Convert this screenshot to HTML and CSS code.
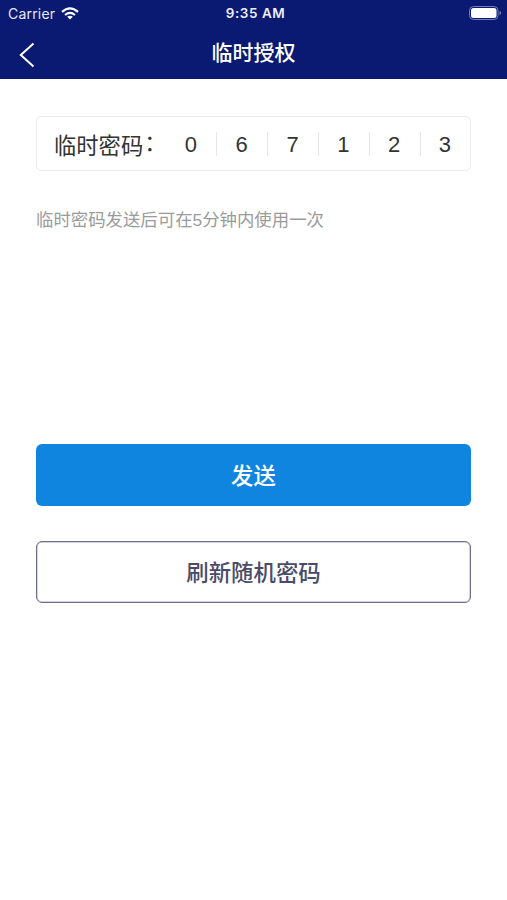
FILE: index.html
```html
<!DOCTYPE html>
<html lang="zh-CN">
<head>
<meta charset="utf-8">
<title>临时授权</title>
<link rel="stylesheet" href="styles.css">
</head>
<body>
<header class="header">
  <div class="status">
    <div class="carrier"><span>Carrier</span>
      <svg class="wifi" width="18" height="13" viewBox="0 0 18 13" fill="none" stroke="#fff" stroke-width="2.2"><path d="M1 4.800Q9-2.200 17 4.800M4 8Q9 3.800 14 8"/><path d="M6.200 9.700Q9 7.600 11.800 9.700L9 12.600Z" fill="#fff" stroke="none"/></svg>
    </div>
    <span class="time">9:35 AM</span>
    <svg class="battery" width="34" height="14" viewBox="0 0 34 14"><rect x=".5" y=".5" width="28.500" height="13" rx="4" fill="none" stroke="#747db8"/><rect x="2" y="2" width="25.500" height="10" rx="2.500" fill="#fff"/><path d="M30.500 4.700q1.700.7 1.700 2.300t-1.700 2.300z" fill="#747db8"/></svg>
  </div>
  <nav class="nav">
    <svg class="back" width="18" height="26" viewBox="0 0 18 26" fill="none" stroke="#fff" stroke-width="2"><path d="M15.500 1.500L2.800 13L15.500 24.500"/></svg>
    <h1 class="title">临时授权</h1>
  </nav>
</header>
<main class="content">
  <section class="code">
    <span class="label">临时密码<span class="colon">：</span></span>
    <div class="digits"><span>0</span><span>6</span><span>7</span><span>1</span><span>2</span><span>3</span></div>
  </section>
  <p class="hint">临时密码发送后可在5分钟内使用一次</p>
  <button class="btn primary">发送</button>
  <button class="btn outline">刷新随机密码</button>
</main>
</body>
</html>
```
FILE: styles.css
```css
* { box-sizing: border-box; }
body { margin: 0; background: #fff; color: #333; font-family: "Liberation Sans", "Noto Sans CJK SC", sans-serif; }
.header { height: 79px; background: #0a1971; color: #fff; }
.status { height: 27px; display: grid; grid-template-columns: 1fr auto 1fr; align-items: start; padding: 0 4px 0 8px; font: 14px/27px Inter, sans-serif; }
.carrier { display: flex; align-items: center; gap: 6px; letter-spacing: .2px; color: #e6e8f5; }
.wifi { margin-top: -1px; }
.time { font-size: 13.500px; font-weight: 600; letter-spacing: .55px; color: #eceefa; }
.battery { justify-self: end; margin-top: 6px; }
.nav { height: 52px; display: grid; grid-template-columns: 40px 1fr 40px; align-items: center; }
.back { margin: 4px 0 0 18px; }
.title { margin: 0; text-align: center; font-size: 21px; line-height: 52px; font-weight: 500; }
.content { padding: 37px 36px 0; }
.code { height: 55px; display: flex; align-items: center; border: 1px solid #ebebeb; border-radius: 5px; padding-left: 17px; }
.label { margin-top: 1px; font-size: 22.300px; width: 113px; white-space: nowrap; }
.colon { position: relative; top: -3px; left: 1px; }
.digits { display: flex; margin-top: 1px; font-size: 22px; }
.digits span { width: 50.800px; padding-top: 1px; text-align: center; line-height: 24px; position: relative; }
.digits span + span::before { content: ""; position: absolute; left: 0; top: 0; width: 1px; height: 24px; background: #e6e6e6; }
.hint { margin: 37px 0 0; height: 24px; line-height: 24px; font-size: 17.400px; white-space: nowrap; color: #9b9b9b; }
.btn { display: block; width: 435px; height: 62px; padding: 0 0 2px; border-radius: 6px; font: 500 22.400px/58px "Noto Sans CJK SC", sans-serif; }
.primary { margin-top: 212px; border: 0; background: #1085e0; color: #fff; }
.outline { margin-top: 35px; border: 1px solid #6d6f8c; box-shadow: inset 0 0 0 .5px #a5a6b9; background: #fff; color: #494b69; }
```
